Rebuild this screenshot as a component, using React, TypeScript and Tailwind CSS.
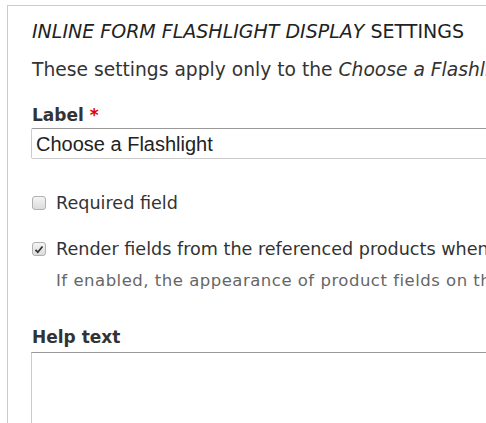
import React from "react";

export default function App() {
  const font = { fontFamily: '"DejaVu Sans", "Open Sans", sans-serif' };
  return (
    <div className="w-[486px] h-[423px] overflow-hidden bg-white" style={font}>
      <div className="mt-[5px] ml-[7px] w-[600px] h-[500px] border-t border-l border-[#cccccc] pl-[24px] pt-[13px] text-[#333333]">
        <div className="text-[19px] leading-[24px] uppercase text-[#222222] whitespace-nowrap">
          <span className="italic">Inline form Flashlight display</span> Settings
        </div>
        <div className="mt-[15px] text-[18.7px] leading-[24px] text-[#333333] whitespace-nowrap">
          These settings apply only to the <em>Choose a Flashlight</em> field when editing content.
        </div>
        <div className="mt-[21px] text-[17px] leading-[24px] font-bold text-[#333333]">
          Label <span className="text-[#e00000]">*</span>
        </div>
        <div className="mt-[1px] -ml-[1px] w-[560px] h-[31px] border border-[#cccccc] border-t-[#999999] rounded-[2px] flex items-center pl-[4px] text-[20px] text-[#222222]" style={{ fontFamily: '"Liberation Sans", Arial, sans-serif' }}>
          Choose a Flashlight
        </div>
        <div className="mt-[32px] flex items-center gap-[10px] text-[17.6px] leading-[24px] whitespace-nowrap">
          <span className="shrink-0 w-[14px] h-[14px] rounded-[3px] border border-[#b0b0b0] bg-gradient-to-b from-[#f4f4f4] to-[#dcdcdc]" />
          <span>Required field</span>
        </div>
        <div className="mt-[22px] flex items-center gap-[10px] text-[17.6px] leading-[24px] whitespace-nowrap">
          <span className="shrink-0 w-[14px] h-[14px] rounded-[3px] border border-[#b0b0b0] bg-gradient-to-b from-[#f4f4f4] to-[#dcdcdc] flex items-center justify-center">
            <svg width="10" height="9" viewBox="0 0 10 9">
              <path d="M1.5 4.8 L3.8 7.2 L8.5 1.5" stroke="#333" strokeWidth="1.8" fill="none" />
            </svg>
          </span>
          <span>Render fields from the referenced products when viewing content</span>
        </div>
        <div className="mt-[8px] ml-[24px] text-[16.5px] leading-[24px] tracking-[0.5px] text-[#666666] whitespace-nowrap">
          If enabled, the appearance of product fields on the referencing entity is controlled here.
        </div>
        <div className="mt-[32px] text-[17px] leading-[24px] font-bold text-[#333333]">Help text</div>
        <div className="mt-[3px] -ml-[1px] w-[560px] h-[100px] border border-[#cccccc] border-t-[#999999]" />
      </div>
    </div>
  );
}
